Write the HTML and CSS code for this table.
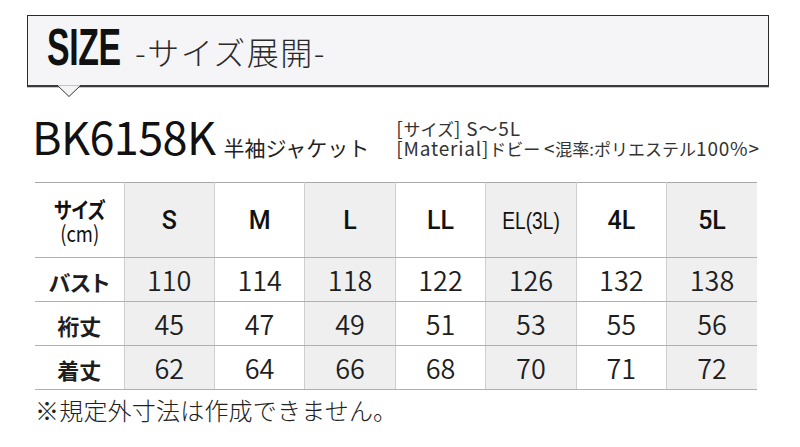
FILE: index.html
```html
<!DOCTYPE html>
<html lang="ja">
<head>
<meta charset="utf-8">
<link rel="stylesheet" href="styles.css">
</head>
<body>
<div class="page">
  <div class="banner">
    <span class="size-word">SIZE</span>
    <span class="size-jp">-サイズ展開-</span>
    <svg class="tail" width="26" height="13" viewBox="0 0 26 13"><polygon points="0,0 12,11.5 24,0" fill="#f5f5f7" stroke="#333" stroke-width="1"/><rect x="1" y="-1" width="22" height="1.5" fill="#f5f5f7"/></svg>
  </div>
  <div class="title-row">
    <span class="model">BK6158K</span>
    <span class="kind">半袖ジャケット</span>
    <div class="info">
      <div class="info-line"><span class="lat">[</span>サイズ<span class="lat">] S〜5L</span></div>
      <div class="info-line"><span class="lat">[Material]</span>ドビー <span class="lat">&lt;</span>混率:ポリエステル<span class="lat">100%&gt;</span></div>
    </div>
  </div>
  <table class="size-table">
    <colgroup>
      <col class="c-label"><col><col><col><col><col><col><col>
    </colgroup>
    <tr class="head">
      <th class="label"><span class="cond">サイズ<br><span class="cm">(cm)</span></span></th>
      <th class="shade">S</th>
      <th>M</th>
      <th class="shade">L</th>
      <th>LL</th>
      <th class="shade"><span class="narrow">EL(3L)</span></th>
      <th>4L</th>
      <th class="shade">5L</th>
    </tr>
    <tr>
      <th class="label"><span class="lab">バスト</span></th>
      <td class="shade">110</td><td>114</td><td class="shade">118</td><td>122</td><td class="shade">126</td><td>132</td><td class="shade">138</td>
    </tr>
    <tr>
      <th class="label"><span class="lab">裄丈</span></th>
      <td class="shade">45</td><td>47</td><td class="shade">49</td><td>51</td><td class="shade">53</td><td>55</td><td class="shade">56</td>
    </tr>
    <tr>
      <th class="label"><span class="lab">着丈</span></th>
      <td class="shade">62</td><td>64</td><td class="shade">66</td><td>68</td><td class="shade">70</td><td>71</td><td class="shade">72</td>
    </tr>
  </table>
  <p class="note">※規定外寸法は作成できません。</p>
</div>
</body>
</html>
```
FILE: styles.css
```css
html, body {
  margin: 0;
  padding: 0;
  background: #ffffff;
}
body {
  width: 800px;
  height: 447px;
  overflow: hidden;
  font-family: "Noto Sans CJK JP", sans-serif;
  color: #1e1e1e;
}
.page {
  padding-top: 15px;
}
.banner {
  position: relative;
  margin-left: 27px;
  width: 740px;
  height: 69px;
  background: #f5f5f7;
  border: 1px solid #2a2a2a;
  border-bottom: 2px solid #3a3a3a;
  box-shadow: 0 1px 0 #c8c8c8;
  display: flex;
  align-items: baseline;
  box-sizing: content-box;
}
.size-word {
  display: inline-block;
  font-family: "Liberation Sans", sans-serif;
  font-weight: bold;
  font-size: 52px;
  line-height: 62px;
  margin-left: 19px;
  transform: scaleX(0.65);
  transform-origin: left center;
  color: #111;
  width: 81px;
  letter-spacing: -0.5px;
}
.size-jp {
  font-size: 32px;
  font-weight: 300;
  color: #2a2a2a;
  margin-left: 7px;
  letter-spacing: 1.5px;
}
.tail {
  position: absolute;
  left: 29px;
  bottom: -13px;
}
.title-row {
  display: flex;
  align-items: flex-end;
  margin-left: 32px;
  margin-top: 17px;
  height: 54px;
}
.model {
  font-size: 45px;
  line-height: 44px;
  font-weight: 400;
  color: #111;
  letter-spacing: -0.6px;
}
.kind {
  font-size: 21px;
  line-height: 21px;
  margin-left: 8px;
  color: #222;
}
.info {
  margin-left: 27px;
  font-size: 17px;
  line-height: 19px;
  color: #333;
}
.info-line {
  white-space: nowrap;
}
.lat {
  font-size: 19px;
  letter-spacing: 0.8px;
}
.size-table {
  margin-left: 35px;
  margin-top: 24px;
  width: 722px;
  border-collapse: collapse;
  table-layout: fixed;
  border-top: 1px solid #a8a8a8;
}
.c-label {
  width: 89px;
}
.size-table th, .size-table td {
  padding: 0;
  text-align: center;
  border-bottom: 1px solid #b0b0b0;
  border-left: 1px solid #cfcfcf;
  height: 43px;
  font-size: 27px;
  font-weight: 350;
  color: #1e1e1e;
  line-height: 1;
}
.size-table th.label {
  border-left: none;
}
.size-table tr.head th {
  height: 74px;
  font-family: "Roboto", "Liberation Sans", sans-serif;
  font-weight: 500;
  font-size: 25px;
  color: #111;
}
.shade {
  background: #efefef;
}
.size-table tr.head th.label {
  font-family: "Noto Sans CJK JP", sans-serif;
}
.cond {
  display: inline-block;
  font-size: 22px;
  line-height: 24px;
  font-weight: 700;
  transform: scaleX(0.84);
  font-feature-settings: "palt";
}
.cm {
  font-weight: 400;
  font-size: 22px;
}
.narrow {
  display: inline-block;
  font-family: "Liberation Sans", sans-serif;
  font-weight: normal;
  font-size: 24px;
  transform: scaleX(0.8);
}
.lab {
  font-size: 22px;
  font-weight: 700;
  font-feature-settings: "palt";
}
.note {
  margin: 5px 0 0 35px;
  font-size: 24px;
  font-weight: 300;
  color: #222;
  line-height: 30px;
  letter-spacing: 0.2px;
}
```
